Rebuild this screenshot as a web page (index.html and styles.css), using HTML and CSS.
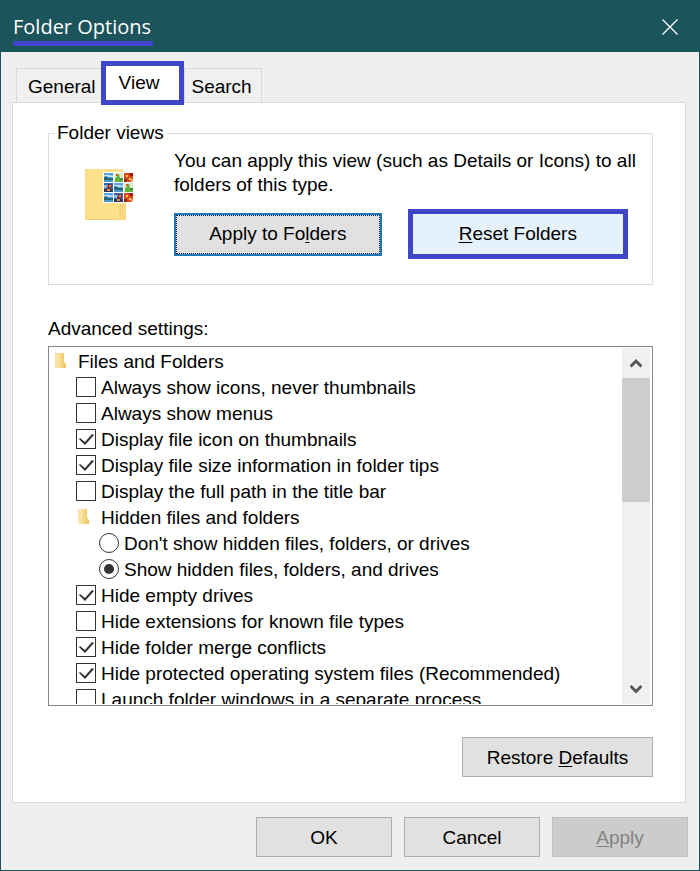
FILE: index.html
```html
<!DOCTYPE html>
<html lang="en">
<head>
<meta charset="utf-8">
<meta name="viewport" content="width=device-width, initial-scale=1">
<title>Folder Options</title>
<link rel="stylesheet" href="styles.css">
</head>
<body>
<svg class="defs" width="0" height="0" aria-hidden="true">
  <defs>
    <linearGradient id="gold" x1="0" y1="0" x2="1" y2="0">
      <stop offset="0" stop-color="#fbe3a0"/><stop offset="1" stop-color="#eec45c"/>
    </linearGradient>
    <symbol id="folder" viewBox="0 0 16 20">
      <path d="M1 2h9v9l2 2v4H5l-4-1z" fill="#fbe5aa"/>
      <path d="M4 2h6v9l2 2v4H4z" fill="url(#gold)"/>
      <path d="M1 2l4 1v15l-4-2z" fill="#f9e2a6"/>
    </symbol>
    <symbol id="lake" viewBox="0 0 9 9" preserveAspectRatio="none">
      <path d="M0 0h9v9H0z" fill="#58a6e2"/><path d="M0 2h5l4 1v1H0z" fill="#c4e4f6"/>
      <path d="M0 4l2-1 3 2 4 0v2H0z" fill="#24677c"/><path d="M0 7h9v2H0z" fill="#4a96c9"/>
    </symbol>
    <symbol id="parrot" viewBox="0 0 9 9" preserveAspectRatio="none">
      <path d="M0 0h9v9H0z" fill="#d9edcc"/><path d="M2 1l3 0 1 4 3 2v2H1V5l2-1z" fill="#60b13e"/>
      <path d="M2 1h2v2H2z" fill="#e15a24"/><path d="M6 5h3v2H6z" fill="#3e8b4f"/>
    </symbol>
    <symbol id="flower" viewBox="0 0 9 9" preserveAspectRatio="none">
      <path d="M0 0h9v9H0z" fill="#dc4a1c"/><path d="M5 0h4v3H6z" fill="#a51812"/>
      <path d="M2 2h2v2H2zM5 5h2v2H5z" fill="#ffd04a"/><path d="M0 6h3v3H0z" fill="#8f2612"/><path d="M7 6h2v3H7z" fill="#f7a274"/>
    </symbol>
    <symbol id="sunset" viewBox="0 0 9 9" preserveAspectRatio="none">
      <path d="M0 0h9v9H0z" fill="#3569b5"/><path d="M0 2h5v3H0z" fill="#91b7e4"/>
      <path d="M4 1h3l1 3-2 2H3z" fill="#702a38"/><path d="M0 6h9v3H0z" fill="#293a62"/><path d="M5 2h2v2H5zM3 6h3v2H3z" fill="#ed8a36"/>
    </symbol>
  </defs>
</svg>

<main class="dialog">
  <header class="titlebar">
    <h1 class="title">Folder Options</h1>
    <button class="close" type="button" aria-label="Close">
      <svg width="16" height="16" viewBox="0 0 16 16"><path d="M.5.5l15 15M15.5.5l-15 15" stroke="#fff" stroke-width="1.3" fill="none"/></svg>
    </button>
  </header>

  <div class="tabs" role="tablist">
    <button class="tab" type="button" role="tab" aria-selected="false">General</button>
    <button class="tab tab-active" type="button" role="tab" aria-selected="true">View</button>
    <button class="tab" type="button" role="tab" aria-selected="false">Search</button>
  </div>

  <section class="panel" role="tabpanel">
    <fieldset class="views">
      <legend>Folder views</legend>
      <div class="views-row">
        <svg class="views-icon" width="50" height="54" viewBox="0 0 50 54" aria-hidden="true">
          <path d="M1 1h38v32l3 3v16H1z" fill="#ffe08b"/>
          <path d="M1 1h2v51H1z" fill="#fbdb83"/>
          <path d="M36 36l4-3 2 3v16h-6z" fill="#fbd982"/>
          <path d="M36 37v15" stroke="#efca6d"/>
          <path d="M1 51.5h41" stroke="#f4cf74"/>
          <path d="M19 4h30v31H19z" fill="#fff"/>
          <use href="#lake" x="20" y="5" width="9" height="9"/><use href="#parrot" x="30" y="5" width="9" height="9"/><use href="#flower" x="40" y="5" width="9" height="9"/>
          <use href="#sunset" x="20" y="15" width="9" height="9"/><use href="#lake" x="30" y="15" width="9" height="9"/><use href="#parrot" x="40" y="15" width="9" height="9"/>
          <use href="#lake" x="20" y="25" width="9" height="9"/><use href="#sunset" x="30" y="25" width="9" height="9"/><use href="#flower" x="40" y="25" width="9" height="9"/>
        </svg>
        <div class="views-main">
          <p class="views-text">You can apply this view (such as Details or Icons) to all<br>folders of this type.</p>
          <div class="views-buttons">
            <button class="btn btn-default" type="button">Apply to Fo<u>l</u>ders</button>
            <button class="btn btn-marked" type="button"><u>R</u>eset Folders</button>
          </div>
        </div>
      </div>
    </fieldset>

    <h2 class="label" id="advanced">Advanced settings:</h2>
    <div class="list" role="group" aria-labelledby="advanced">
      <ul class="items">
        <li class="row"><svg class="folder" width="16" height="20"><use href="#folder"/></svg><span>Files and Folders</span></li>
        <li class="row level-1"><input type="checkbox" id="o1"><label for="o1">Always show icons, never thumbnails</label></li>
        <li class="row level-1"><input type="checkbox" id="o2"><label for="o2">Always show menus</label></li>
        <li class="row level-1"><input type="checkbox" id="o3" checked><label for="o3">Display file icon on thumbnails</label></li>
        <li class="row level-1"><input type="checkbox" id="o4" checked><label for="o4">Display file size information in folder tips</label></li>
        <li class="row level-1"><input type="checkbox" id="o5"><label for="o5">Display the full path in the title bar</label></li>
        <li class="row level-1"><svg class="folder" width="16" height="20"><use href="#folder"/></svg><span>Hidden files and folders</span></li>
        <li class="row level-2"><input type="radio" name="hidden" id="r1"><label for="r1">Don't show hidden files, folders, or drives</label></li>
        <li class="row level-2"><input type="radio" name="hidden" id="r2" checked><label for="r2">Show hidden files, folders, and drives</label></li>
        <li class="row level-1"><input type="checkbox" id="o6" checked><label for="o6">Hide empty drives</label></li>
        <li class="row level-1"><input type="checkbox" id="o7"><label for="o7">Hide extensions for known file types</label></li>
        <li class="row level-1"><input type="checkbox" id="o8" checked><label for="o8">Hide folder merge conflicts</label></li>
        <li class="row level-1"><input type="checkbox" id="o9" checked><label for="o9">Hide protected operating system files (Recommended)</label></li>
        <li class="row level-1"><input type="checkbox" id="o10"><label for="o10">Launch folder windows in a separate process</label></li>
      </ul>
      <div class="scrollbar">
        <button class="arrow" type="button" aria-label="Scroll up"><svg width="12" height="10" viewBox="0 0 12 10"><path d="M.5 8.500L6 3l5.500 5.500" stroke="#555" stroke-width="3" fill="none"/></svg></button>
        <div class="thumb"></div>
        <button class="arrow arrow-down" type="button" aria-label="Scroll down"><svg width="12" height="10" viewBox="0 0 12 10"><path d="M.5 2L6 7.500 11.500 2" stroke="#555" stroke-width="3" fill="none"/></svg></button>
      </div>
    </div>

    <div class="restore"><button class="btn btn-wide" type="button">Restore <u>D</u>efaults</button></div>
  </section>

  <footer class="actions">
    <button class="btn" type="button">OK</button>
    <button class="btn" type="button">Cancel</button>
    <button class="btn" type="button" disabled><u>A</u>pply</button>
  </footer>
</main>
</body>
</html>
```
FILE: styles.css
```css
* { box-sizing: border-box; }

body {
  margin: 0;
  background: #efefef;
  color: #000;
  font: 19px/22px "Liberation Sans", Arial, sans-serif;
}

button { font: inherit; color: inherit; padding: 0; }
u { text-underline-offset: 2px; text-decoration-thickness: 1px; }
.defs { position: absolute; }

.dialog {
  display: flex;
  flex-direction: column;
  min-height: 100vh;
  border: 1px solid #1c545c;
  border-top: 0;
}

.titlebar {
  display: flex;
  justify-content: space-between;
  align-items: center;
  height: 52px;
  padding: 6px 21px 0 12px;
  background: #1c545c;
  color: #fff;
}
.title {
  margin: 0;
  padding-right: 2px;
  border-bottom: 5px solid #4046c8;
  border-radius: 2px;
  font: 20px/28px "Open Sans", "Noto Sans", sans-serif;
}
.close { display: flex; margin-bottom: 4px; border: 0; background: none; }

.tabs {
  display: flex;
  align-items: flex-end;
  padding: 9px 15px 0;
}
.tab {
  height: 34px;
  padding: 2px 9px 0 6px;
  border: 1px solid #d9d9d9;
  border-bottom: 0;
  background: #f0f0f0;
}
.tab:first-child { padding: 2px 6px 0 11px; }
.tab-active {
  position: relative;
  height: 44px;
  margin: 0 0 -3px -2px;
  padding: 0 20px 0 13px;
  border: 5px solid #4046c8;
  background: #fff;
}

.panel {
  display: flex;
  flex-direction: column;
  flex: 1;
  margin: 0 13px 0 11px;
  padding: 19px 32px 25px 35px;
  border: 1px solid #d9d9d9;
  background: #fff;
}

.views {
  min-width: 0;
  margin: 0;
  padding: 5px 24px 25px 35px;
  border: 1px solid #dcdcdc;
}
.views legend { margin-left: -29px; padding: 0 3px 0 2px; }
.views-row { display: flex; gap: 40px; }
.views-icon { flex: none; margin-top: 19px; }
.views-main { flex: 1; min-width: 0; }
.views-text { margin: 0 0 12px; line-height: 24px; white-space: nowrap; }
.views-buttons { display: flex; align-items: center; gap: 26px; }

.btn {
  min-width: 136px;
  height: 40px;
  padding-top: 1px;
  border: 1px solid #adadad;
  background: #e1e1e1;
}
.btn:disabled { border-color: #bfbfbf; background: #ccc; color: #838383; }
.btn-wide { min-width: 191px; }
.btn-default {
  flex: 30;
  height: 43px;
  padding: 0;
  border: 2px solid #1f78b4;
  outline: 1px dotted #0a1c50;
  outline-offset: -3px;
}
.btn-marked {
  flex: 31;
  height: 50px;
  padding: 0;
  border: 5px solid #4046c8;
  background: #e5f1fb;
}

.label { margin: 33px 0 6px; font: inherit; }

.list {
  display: flex;
  height: 360px;
  padding: 1px 2px 1px 5px;
  border: 1px solid #828790;
}
.items {
  flex: 1;
  margin: 0;
  padding: 0;
  overflow: hidden;
  list-style: none;
}
.row { display: flex; align-items: center; gap: 5px; height: 26px; white-space: nowrap; }
.row label, .row span { padding-top: 2px; }
.level-1 { padding-left: 22px; }
.level-2 { padding-left: 45px; }
.folder { flex: none; margin-right: 3px; }
.level-1 .folder { margin-left: 1px; }

.row input {
  appearance: none;
  flex: none;
  width: 20px;
  height: 20px;
  margin: 0;
  border: 1px solid #333;
  background: #fff;
}
.row input[type="checkbox"]:checked::before {
  content: "";
  display: block;
  height: 18px;
  background: #333;
  clip-path: polygon(2px 9px, 3px 8px, 8px 12px, 15px 4px, 17px 5px, 8px 15px);
}
.row input[type="radio"] { display: grid; place-items: center; border-radius: 50%; }
.row input[type="radio"]:checked::before {
  content: "";
  width: 10px;
  height: 10px;
  border-radius: 50%;
  background: #333;
}

.scrollbar { display: flex; flex-direction: column; width: 28px; background: #f0f0f0; }
.arrow {
  display: flex;
  align-items: center;
  justify-content: center;
  height: 30px;
  border: 0;
  background: none;
}
.arrow-down { margin-top: auto; }
.thumb { height: 124px; background: #cdcdcd; }

.restore { display: flex; justify-content: flex-end; margin-top: 31px; }
.actions {
  display: flex;
  justify-content: flex-end;
  gap: 12px;
  padding: 14px 11px 13px;
}
```
